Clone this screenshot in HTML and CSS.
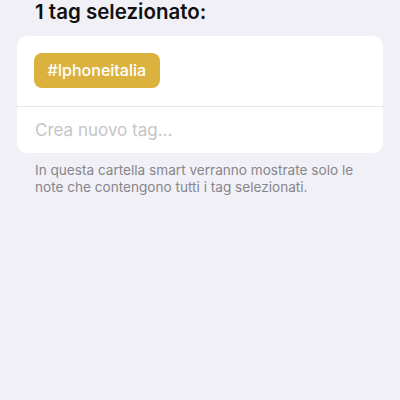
FILE: index.html
```html
<!DOCTYPE html>
<html lang="it">
<head>
    <meta charset="UTF-8">
    <meta name="viewport" content="width=device-width, initial-scale=1.0">
    <title>Tag selezionati</title>
    <link rel="stylesheet" href="styles.css">
</head>
<body>
    <div class="screen">
        <h2 class="section-title">1 tag selezionato:</h2>

        <div class="card">
            <div class="tag-list">
                <span class="tag">#Iphoneitalia</span>
            </div>
            <div class="new-tag">
                <input type="text" placeholder="Crea nuovo tag...">
            </div>
        </div>

        <p class="footnote">In questa cartella smart verranno mostrate solo le note che contengono tutti i tag selezionati.</p>
    </div>
</body>
</html>
```

FILE: styles.css
```css
* {
    margin: 0;
    padding: 0;
    box-sizing: border-box;
}

body {
    font-family: Inter, "Noto Sans", sans-serif;
    background: #f1f0f6;
    min-height: 100vh;
}

.screen {
    padding: 0 17px;
}

.section-title {
    font-size: 20.5px;
    font-weight: 600;
    color: #111;
    line-height: 24px;
    padding: 0 0 12px 18px;
}

.card {
    background: #fff;
    border-radius: 10px;
    overflow: hidden;
}

.tag-list {
    padding: 17px 17px 18px;
    border-bottom: 1px solid #e6e6ea;
}

.tag {
    display: inline-block;
    background: #dcb23e;
    color: #fff;
    font-size: 16px;
    font-weight: 500;
    line-height: 35px;
    height: 35px;
    padding: 0 13.5px;
    border-radius: 8px;
}

.new-tag {
    padding: 0 18px;
    height: 46px;
    display: flex;
    align-items: center;
}

.new-tag input {
    border: none;
    outline: none;
    background: none;
    width: 100%;
    font-family: inherit;
    font-size: 17px;
    color: #111;
}

.new-tag input::placeholder {
    color: #c5c5c9;
}

.footnote {
    font-size: 13.6px;
    line-height: 17px;
    color: #86868b;
    padding: 9px 18px 0;
}
```
